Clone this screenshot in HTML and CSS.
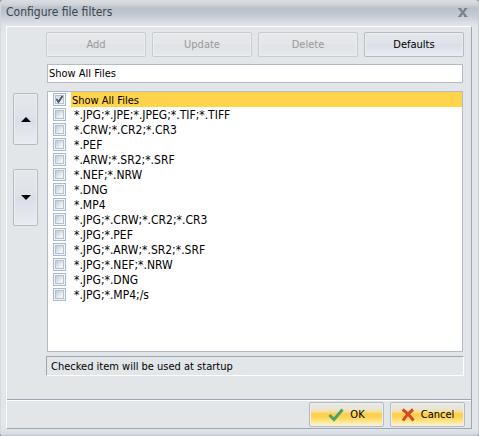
FILE: index.html
```html
<!DOCTYPE html>
<html lang="en">
<head>
<meta charset="utf-8">
<meta name="viewport" content="width=device-width, initial-scale=1">
<title>Configure file filters</title>
<link rel="stylesheet" href="styles.css">
</head>
<body>
<main class="dialog">
  <header class="titlebar">
    <h1 class="title">Configure file filters</h1>
    <button class="close" type="button" aria-label="Close">
      <svg width="10" height="9" viewBox="0 0 10 9"><path d="M0 .5h3.5M6 .5h3.5M0 8.500h3.500M6 8.500h3.500" stroke="#788391"/><path d="M1.500 0.500L8 8.500M8 .5L1.500 8.500" stroke="#788391" stroke-width="2.200"/></svg>
    </button>
  </header>
  <form class="panel">
    <div class="content">
      <div class="order">
        <button class="button move-up" type="button" aria-label="Move up"><svg width="10" height="5" viewBox="0 0 10 5"><path d="M5 0L10 5H0z"/></svg></button>
        <button class="button move-down" type="button" aria-label="Move down"><svg width="10" height="5" viewBox="0 0 10 5"><path d="M0 0H10L5 5z"/></svg></button>
      </div>
      <div class="editor">
        <div class="actions">
          <button class="button" type="button" disabled>Add</button>
          <button class="button" type="button" disabled>Update</button>
          <button class="button" type="button" disabled>Delete</button>
          <button class="button" type="button">Defaults</button>
        </div>
        <input class="filter" type="text" value="Show All Files" aria-label="Filter">
        <ul class="list">
          <li><label class="row selected"><input type="checkbox" checked><span>Show All Files</span></label></li>
          <li><label class="row"><input type="checkbox"><span>*.JPG;*.JPE;*.JPEG;*.TIF;*.TIFF</span></label></li>
          <li><label class="row"><input type="checkbox"><span>*.CRW;*.CR2;*.CR3</span></label></li>
          <li><label class="row"><input type="checkbox"><span>*.PEF</span></label></li>
          <li><label class="row"><input type="checkbox"><span>*.ARW;*.SR2;*.SRF</span></label></li>
          <li><label class="row"><input type="checkbox"><span>*.NEF;*.NRW</span></label></li>
          <li><label class="row"><input type="checkbox"><span>*.DNG</span></label></li>
          <li><label class="row"><input type="checkbox"><span>*.MP4</span></label></li>
          <li><label class="row"><input type="checkbox"><span>*.JPG;*.CRW;*.CR2;*.CR3</span></label></li>
          <li><label class="row"><input type="checkbox"><span>*.JPG;*.PEF</span></label></li>
          <li><label class="row"><input type="checkbox"><span>*.JPG;*.ARW;*.SR2;*.SRF</span></label></li>
          <li><label class="row"><input type="checkbox"><span>*.JPG;*.NEF;*.NRW</span></label></li>
          <li><label class="row"><input type="checkbox"><span>*.JPG;*.DNG</span></label></li>
          <li><label class="row"><input type="checkbox"><span>*.JPG;*.MP4;/s</span></label></li>
        </ul>
        <p class="status">Checked item will be used at startup</p>
      </div>
    </div>
    <footer class="footer">
      <button class="button gold" type="button"><svg width="16" height="14" viewBox="0 0 16 14"><path d="M1.500 7L6 11.500L14.500 1.500" fill="none" stroke="#4ba36c" stroke-width="3"/></svg>OK</button>
      <button class="button gold" type="button"><svg width="14" height="14" viewBox="0 0 14 14"><path d="M1.500 1.500Q7 5 12.500 12.500M12 1.500Q6 6 2 12.500" fill="none" stroke="#cf4b27" stroke-width="3"/></svg>Cancel</button>
    </footer>
  </form>
</main>
</body>
</html>
```
FILE: styles.css
```css
* {
  box-sizing: border-box;
}

body {
  margin: 0;
  background: #8b939c;
  color: #000;
  font: 11px/15px "DejaVu Sans Condensed", Tahoma, sans-serif;
}

button,
input {
  margin: 0;
  color: inherit;
  font: inherit;
}

.dialog {
  display: flex;
  flex-direction: column;
  min-height: 100vh;
  padding: 0 7px 7px 6px;
  border-radius: 4px;
  background: linear-gradient(#dadde0 0, #d2d6da 4px, #b9c1ca 8px, #c0c7cf 14px, #d9dde2 22px, #e2e6e9 27px, #e2e6e9 calc(100% - 7px), #cfd5db 100%);
  box-shadow: inset 1px 0 #d3d8dd, inset -1px 0 #c5ccd3, inset 0 -1px #bfc6cd;
}

.titlebar {
  display: flex;
  align-items: center;
  justify-content: space-between;
  height: 26px;
  padding: 0 4px 1px 0;
}

.title {
  margin: 0;
  color: #3b4650;
  font-size: 12px;
  font-weight: normal;
}

.close {
  display: flex;
  padding: 0;
  border: 0;
  background: none;
}

.panel {
  display: flex;
  flex: 1;
  flex-direction: column;
  border: 1px solid #9aa7b4;
  border-top-color: #fff;
  border-left-color: #fff;
  background: #e2e6e9;
}

.content {
  display: flex;
  flex: 1;
  gap: 8px;
  padding: 5px 7px 23px 6px;
}

.order {
  display: flex;
  flex: 0 0 25px;
  flex-direction: column;
  gap: 24px;
  padding-top: 61px;
}

.button {
  display: flex;
  align-items: center;
  justify-content: center;
  height: 25px;
  padding: 0;
  border: 1px solid #b4bbc4;
  border-radius: 2px;
  background: linear-gradient(#e4e7ea, #dfe3e9 45%, #d9dee7 50%, #e9edf2);
  box-shadow: inset 0 0 0 1px #eceff2;
}

.button:disabled {
  border-color: #c8ccd2;
  background: linear-gradient(#e6e8ea, #e4e6e9 48%, #dfe2e6 52%, #e5e8eb);
  color: #999;
}

.order .move-up {
  height: 52px;
}

.order .move-down {
  height: 57px;
}

.editor {
  display: flex;
  flex: 1;
  flex-direction: column;
  min-width: 0;
}

.actions {
  display: grid;
  grid-template-columns: repeat(4, 1fr);
  gap: 6px;
}

.filter {
  height: 19px;
  margin: 7px 1px 8px;
  padding: 0 1px;
  border: 1px solid #b2bac8;
  border-radius: 0;
  background: #fff;
}

.list {
  flex: 1;
  margin: 0 1px 4px;
  padding: 0 0 0 5px;
  border: 1px solid #b2bac8;
  background: #fff;
  font-size: 12px;
  list-style: none;
}

.row {
  display: flex;
  align-items: center;
  gap: 5px;
  height: 15px;
}

.row span {
  flex: 1;
  height: 15px;
  padding-left: 3px;
  line-height: 17px;
}

.row input {
  appearance: none;
  width: 13px;
  height: 13px;
  border: 1px solid #a9b9cf;
  background: linear-gradient(135deg, #c4cad1, #f2f3f4 75%) center / 7px 7px no-repeat, linear-gradient(#b5c0ce, #b5c0ce) center / 9px 9px no-repeat, #f1f4f8;
}

.row input:checked {
  background: url("data:image/svg+xml,%3Csvg xmlns='http://www.w3.org/2000/svg' viewBox='0 0 11 11'%3E%3Cpath d='M2.500 5L4.500 8L8.500 2' fill='none' stroke='%23405169' stroke-width='1.800'/%3E%3C/svg%3E"), linear-gradient(135deg, #d5dae0, #f4f5f6) center / 7px 7px no-repeat, linear-gradient(#b5c0ce, #b5c0ce) center / 9px 9px no-repeat, #f1f4f8;
}

.row.selected span {
  padding-left: 1px;
  background: #ffd34a;
  font-size: 11px;
}

.status {
  margin: 0;
  padding: 2px 4px 1px;
  border: 1px solid #9aa7b4;
  border-right-color: #fff;
  border-bottom-color: #fff;
}

.footer {
  display: flex;
  justify-content: flex-end;
  gap: 6px;
  padding: 2px 6px 1px;
  border-top: 1px solid #9aa7b4;
  box-shadow: inset 0 1px #fff;
}

.gold {
  gap: 6px;
  width: 75px;
  background: linear-gradient(#e6e8ea 0, #ebe5d0 25%, #f4dfa2 40%, #ffcf48 45%, #ffd04a 58%, #ffe58d 80%, #fff4ce);
}
```
